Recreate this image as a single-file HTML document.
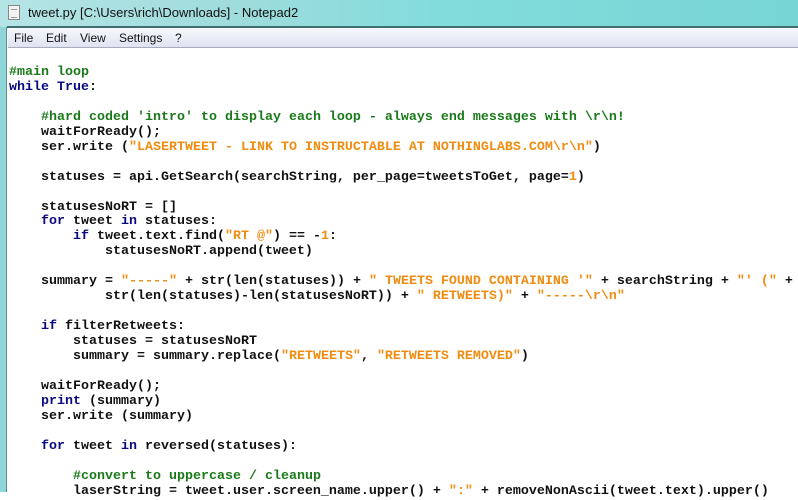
<!DOCTYPE html>
<html><head><meta charset="utf-8"><style>
*{margin:0;padding:0;box-sizing:border-box}
body{width:798px;height:492px;overflow:hidden;background:#fff;position:relative;font-family:"Liberation Sans",sans-serif}
.title{position:absolute;left:0;top:0;width:798px;height:27px;background:linear-gradient(90deg,#b5e4e6 0%,#9fdcdc 30%,#82dcdc 55%,#78d5d5 100%)}
.title .t{position:absolute;left:28px;top:5px;font-size:13px;color:#111}
.icon{position:absolute;left:8px;top:5px;width:12px;height:15px;background:#f2f2f2;border:1px solid #888}
.icon:after{content:"";position:absolute;left:2px;top:3px;width:6px;height:7px;border-top:1px solid #999;border-bottom:1px solid #999}
.frame{position:absolute;left:0;top:27px;width:7px;height:465px;background:#8fd6d8;border-right:1px solid #5a8f90}
.topline{position:absolute;left:7px;top:26px;width:791px;height:2px;background:#3f6f70}
.menu{position:absolute;left:8px;top:28px;width:790px;height:20px;background:linear-gradient(#f7f8fc,#dfe3f2);border-bottom:1px solid #a8acbd;font-size:12px;color:#111}
.menu span{position:absolute;top:3px}
pre{position:absolute;left:9px;top:51px;font-family:"Liberation Mono",monospace;font-size:13.33px;line-height:14.96px;color:#111;font-weight:bold;letter-spacing:0}
.c{color:#1a7a1a}.k{color:#0a0a80}.s{color:#f08c10}.n{color:#f08c10}
</style></head><body>
<div class="title"><div class="icon"></div><div class="t">tweet.py [C:\Users\rich\Downloads] - Notepad2</div></div>
<div class="topline"></div>
<div class="frame"></div>
<div class="menu"><span style="left:6px">File</span><span style="left:38px">Edit</span><span style="left:72px">View</span><span style="left:111px">Settings</span><span style="left:167px">?</span></div>
<pre>

<span class="c">#main loop</span>
<span class="k">while</span> <span class="k">True</span>:

    <span class="c">#hard coded 'intro' to display each loop - always end messages with \r\n!</span>
    waitForReady();
    ser.write (<span class="s">"LASERTWEET - LINK TO INSTRUCTABLE AT NOTHINGLABS.COM\r\n"</span>)

    statuses = api.GetSearch(searchString, per_page=tweetsToGet, page=<span class="n">1</span>)

    statusesNoRT = []
    <span class="k">for</span> tweet <span class="k">in</span> statuses:
        <span class="k">if</span> tweet.text.find(<span class="s">"RT @"</span>) == -<span class="n">1</span>:
            statusesNoRT.append(tweet)

    summary = <span class="s">"-----"</span> + str(len(statuses)) + <span class="s">" TWEETS FOUND CONTAINING '"</span> + searchString + <span class="s">"' ("</span> +
            str(len(statuses)-len(statusesNoRT)) + <span class="s">" RETWEETS)"</span> + <span class="s">"-----\r\n"</span>

    <span class="k">if</span> filterRetweets:
        statuses = statusesNoRT
        summary = summary.replace(<span class="s">"RETWEETS"</span>, <span class="s">"RETWEETS REMOVED"</span>)

    waitForReady();
    <span class="k">print</span> (summary)
    ser.write (summary)

    <span class="k">for</span> tweet <span class="k">in</span> reversed(statuses):

        <span class="c">#convert to uppercase / cleanup</span>
        laserString = tweet.user.screen_name.upper() + <span class="s">":"</span> + removeNonAscii(tweet.text).upper()
</pre>
</body></html>
